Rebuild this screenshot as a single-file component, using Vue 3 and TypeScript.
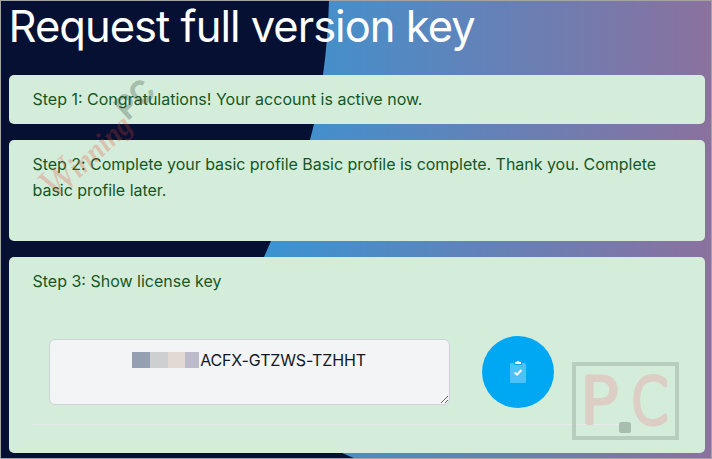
<template>
  <main class="page">
    <svg class="backdrop" viewBox="0 0 712 459" aria-hidden="true">
      <defs>
        <linearGradient id="sky" gradientUnits="userSpaceOnUse" x1="264" y1="0" x2="712" y2="0">
          <stop offset="0" stop-color="#3b94d1" />
          <stop offset="0.5" stop-color="#6382b8" />
          <stop offset="1" stop-color="#8b719e" />
        </linearGradient>
      </defs>
      <path
        fill="url(#sky)"
        d="M329 0 Q328 39 323 75 Q320 99 314 124 L310 140 Q299 182 271 241 L264 257 C225 340 255 405 342 453 L356 459 H712 V0 Z"
      />
    </svg>

    <h1 class="title">Request full version key</h1>

    <div class="steps">
      <section v-for="step in steps" :key="step.id" class="card" :class="`card-${step.id}`">
        <p class="card-text">Step {{ step.id }}: {{ step.text }}</p>
        <template v-if="step.id === 3">
          <div class="license">
            <div class="key-field">
              <textarea v-model="licenseKey" class="key-input" readonly aria-label="License key"></textarea>
              <div class="mask" aria-hidden="true"><i /><i /><i /><i /></div>
            </div>
            <button type="button" class="copy" aria-label="Copy license key" @click="copyKey">
              <svg width="16" height="22" viewBox="0 0 16 22">
                <rect y="2" width="16" height="20" rx="1.5" fill="#fff" fill-opacity="0.3" />
                <path d="M4 2h8v2H4z" fill="#00a8f3" />
                <path d="M5 1h1.500Q6.800 0 8 0T9.500 1H11v2H5z" fill="#fff" />
                <path d="M4.700 11.500l2.400 2.200 4.300-4.700" fill="none" stroke="#fff" stroke-width="2" />
              </svg>
            </button>
          </div>
          <hr class="rule" />
        </template>
      </section>
    </div>

    <svg class="watermark" viewBox="0 0 712 459" aria-hidden="true">
      <g transform="translate(60 198) rotate(-43)">
        <text class="script script-cap" x="-6" y="0" textLength="35" lengthAdjust="spacingAndGlyphs">W</text>
        <text class="script" x="27" y="-1" textLength="75" lengthAdjust="spacingAndGlyphs">inning</text>
      </g>
      <g transform="translate(130 119) rotate(-43)">
        <text class="bold" x="-3" y="0" textLength="40" lengthAdjust="spacingAndGlyphs">PC</text>
      </g>
      <rect x="574" y="364" width="103" height="74" class="frame" />
      <text class="mark" x="580" y="422.500" textLength="39" lengthAdjust="spacingAndGlyphs">P</text>
      <text class="mark" x="631" y="422.500" textLength="37" lengthAdjust="spacingAndGlyphs">C</text>
      <rect x="619" y="422" width="12" height="11" rx="2.500" class="dot" />
    </svg>
  </main>
</template>

<script setup lang="ts">
import { ref } from 'vue'

interface Step {
  id: number
  text: string
}

const steps: Step[] = [
  { id: 1, text: 'Congratulations! Your account is active now.' },
  {
    id: 2,
    text: 'Complete your basic profile Basic profile is complete. Thank you. Complete basic profile later.',
  },
  { id: 3, text: 'Show license key' },
]

const licenseKey = ref('ACFX-GTZWS-TZHHT')

const copyKey = () => {
  navigator.clipboard?.writeText(licenseKey.value)
}
</script>

<style>
body {
  overflow: hidden;
}
</style>

<style scoped>
.page {
  position: relative;
  box-sizing: border-box;
  width: 712px;
  height: 459px;
  padding: 0 7px 0 9px;
  overflow: hidden;
  background: #051032;
  font-family: Inter, 'Liberation Sans', sans-serif;
}

.page::after {
  content: '';
  position: absolute;
  inset: 0;
  border: 1px solid #a3a3a3;
  pointer-events: none;
}

.backdrop,
.watermark {
  position: absolute;
  inset: 0;
  width: 712px;
  height: 459px;
  pointer-events: none;
}

.title {
  position: relative;
  left: -0.5px;
  margin: 0;
  height: 75px;
  color: #fff;
  font-size: 43.5px;
  font-weight: 400;
  letter-spacing: -0.98px;
  line-height: 53px;
  white-space: nowrap;
}

.steps {
  position: relative;
  display: flex;
  flex-direction: column;
  gap: 16px;
}

.card {
  box-sizing: border-box;
  padding: 11px 24px 12px 23.5px;
  border-radius: 5px;
  background: #d4edda;
}

.card-1 {
  height: 49px;
}

.card-2 {
  height: 101px;
}

.card-3 {
  height: 196px;
}

.card-text {
  margin: 0;
  color: #155724;
  font-size: 16px;
  line-height: 26px;
}

.card-2 .card-text {
  letter-spacing: -0.03px;
}

.license {
  display: flex;
  gap: 32px;
  margin: 42px 0 0 16.5px;
}

.key-field {
  position: relative;
  width: 401px;
  height: 66px;
  margin-top: 3px;
}

.key-input {
  display: block;
  box-sizing: border-box;
  width: 100%;
  height: 100%;
  padding: 7px 12px;
  border: 1px solid #d1d1dc;
  border-radius: 6px;
  outline: none;
  background: #f3f4f6;
  color: #111827;
  font: 16px/26px Inter, 'Liberation Sans', sans-serif;
  letter-spacing: -0.14px;
  text-align: center;
  text-indent: 67px;
  resize: both;
}

.mask {
  position: absolute;
  top: 13px;
  left: 83px;
  display: grid;
  grid-template-columns: 18px 18px 17px 14px;
  height: 16px;
}

.mask i:nth-child(1) {
  background: #94a0b1;
}

.mask i:nth-child(2) {
  background: #cdcfd1;
}

.mask i:nth-child(3) {
  background: #e2d9d3;
}

.mask i:nth-child(4) {
  background: #bbbbcc;
}

.copy {
  display: flex;
  align-items: center;
  justify-content: center;
  width: 72px;
  height: 72px;
  padding: 0;
  border: none;
  border-radius: 50%;
  background: #00a8f3;
  cursor: pointer;
}

.rule {
  width: 596px;
  height: 1px;
  margin: 16px 0 0;
  border: none;
  background: #e9e9ee;
}

.script {
  fill: #e8412f;
  fill-opacity: 0.25;
  font: italic 700 30px 'Liberation Serif', serif;
}

.script-cap {
  font-weight: 400;
  font-size: 46px;
}

.bold {
  fill: #37483c;
  fill-opacity: 0.28;
  stroke: #37483c;
  stroke-opacity: 0.12;
  font: 700 34px 'Liberation Sans', sans-serif;
}

.frame {
  fill: none;
  stroke: #b8cdbe;
  stroke-width: 4;
}

.mark {
  fill: #dccdc5;
  stroke: #dccdc5;
  stroke-width: 5;
  stroke-linejoin: round;
  font: 200 63px 'DejaVu Sans', sans-serif;
}

.dot {
  fill: #a7bdae;
}
</style>
